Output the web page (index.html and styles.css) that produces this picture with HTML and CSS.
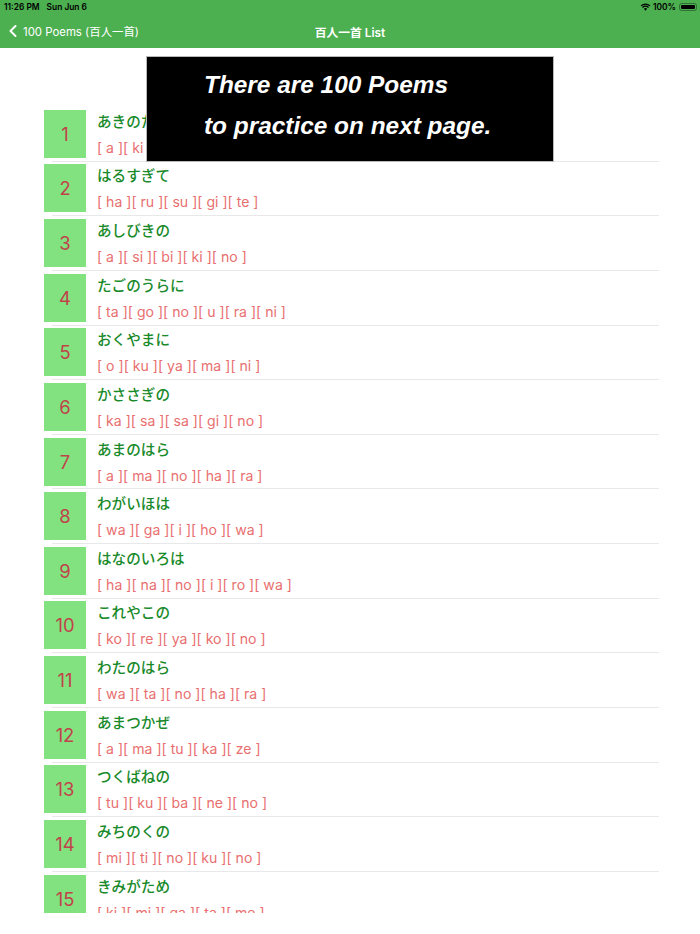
FILE: index.html
```html
<!DOCTYPE html>
<html lang="ja">
<head>
<meta charset="utf-8">
<title>百人一首 List</title>
<link rel="stylesheet" href="styles.css">
</head>
<body>
<header class="header">
  <div class="status">
    <div class="status-left"><span>11:26 PM</span><span>Sun Jun 6</span></div>
    <div class="status-right">
      <svg class="wifi" viewBox="0 0 12 9" width="11" height="8"><path d="M6 8.6 L4.2 6.6 A2.6 2.6 0 0 1 7.8 6.6 Z" fill="#000"/><path d="M2.6 5 A4.9 4.9 0 0 1 9.4 5" stroke="#000" stroke-width="1.4" fill="none"/><path d="M0.9 3.2 A7.4 7.4 0 0 1 11.1 3.2" stroke="#000" stroke-width="1.4" fill="none"/></svg>
      <span>100%</span>
      <span class="battery"><span class="battery-fill"></span></span>
    </div>
  </div>
  <nav class="navbar">
    <a class="back">
      <svg viewBox="0 0 8 12" width="8" height="12"><path d="M6.5 1 L1.5 6 L6.5 11" stroke="#fff" stroke-width="2" fill="none" stroke-linecap="round" stroke-linejoin="round"/></svg>
      <span>100 Poems (百人一首)</span>
    </a>
    <div class="title">百人一首 List</div>
    <div></div>
  </nav>
</header>

<main class="list">
  <div class="row"><div class="num">1</div><div class="txt"><div class="kana">あきのたの</div><div class="roma">[ a ][ ki ][ no ][ ta ][ no ]</div></div></div>
  <div class="row"><div class="num">2</div><div class="txt"><div class="kana">はるすぎて</div><div class="roma">[ ha ][ ru ][ su ][ gi ][ te ]</div></div></div>
  <div class="row"><div class="num">3</div><div class="txt"><div class="kana">あしびきの</div><div class="roma">[ a ][ si ][ bi ][ ki ][ no ]</div></div></div>
  <div class="row"><div class="num">4</div><div class="txt"><div class="kana">たごのうらに</div><div class="roma">[ ta ][ go ][ no ][ u ][ ra ][ ni ]</div></div></div>
  <div class="row"><div class="num">5</div><div class="txt"><div class="kana">おくやまに</div><div class="roma">[ o ][ ku ][ ya ][ ma ][ ni ]</div></div></div>
  <div class="row"><div class="num">6</div><div class="txt"><div class="kana">かささぎの</div><div class="roma">[ ka ][ sa ][ sa ][ gi ][ no ]</div></div></div>
  <div class="row"><div class="num">7</div><div class="txt"><div class="kana">あまのはら</div><div class="roma">[ a ][ ma ][ no ][ ha ][ ra ]</div></div></div>
  <div class="row"><div class="num">8</div><div class="txt"><div class="kana">わがいほは</div><div class="roma">[ wa ][ ga ][ i ][ ho ][ wa ]</div></div></div>
  <div class="row"><div class="num">9</div><div class="txt"><div class="kana">はなのいろは</div><div class="roma">[ ha ][ na ][ no ][ i ][ ro ][ wa ]</div></div></div>
  <div class="row"><div class="num">10</div><div class="txt"><div class="kana">これやこの</div><div class="roma">[ ko ][ re ][ ya ][ ko ][ no ]</div></div></div>
  <div class="row"><div class="num">11</div><div class="txt"><div class="kana">わたのはら</div><div class="roma">[ wa ][ ta ][ no ][ ha ][ ra ]</div></div></div>
  <div class="row"><div class="num">12</div><div class="txt"><div class="kana">あまつかぜ</div><div class="roma">[ a ][ ma ][ tu ][ ka ][ ze ]</div></div></div>
  <div class="row"><div class="num">13</div><div class="txt"><div class="kana">つくばねの</div><div class="roma">[ tu ][ ku ][ ba ][ ne ][ no ]</div></div></div>
  <div class="row"><div class="num">14</div><div class="txt"><div class="kana">みちのくの</div><div class="roma">[ mi ][ ti ][ no ][ ku ][ no ]</div></div></div>
  <div class="row"><div class="num">15</div><div class="txt"><div class="kana">きみがため</div><div class="roma">[ ki ][ mi ][ ga ][ ta ][ me ]</div></div></div>
</main>

<div class="notice">
  <p>There are 100 Poems</p>
  <p>to practice on next page.</p>
</div>
</body>
</html>
```

FILE: styles.css
```css
html, body {
  margin: 0;
  padding: 0;
  background: #ffffff;
}
body {
  font-family: Inter, Roboto, "Noto Sans CJK JP", sans-serif;
  position: relative;
  height: 934px;
  overflow: hidden;
}
.header {
  background: #4caf50;
  height: 48px;
  display: flex;
  flex-direction: column;
}
.status {
  height: 14px;
  display: flex;
  justify-content: space-between;
  align-items: center;
  padding: 0 2px 0 4px;
  font-size: 8.4px;
  font-weight: 600;
  color: #000;
}
.status-left {
  display: flex;
  gap: 7px;
}
.status-right {
  display: flex;
  align-items: center;
  gap: 2px;
}
.battery {
  width: 18px;
  height: 8px;
  border: 1px solid rgba(0,0,0,0.35);
  border-radius: 2.5px;
  padding: 1px;
  box-sizing: border-box;
  display: inline-flex;
  margin-left: 1px;
  margin-right: 1px;
}
.battery-fill {
  flex: 1;
  background: #000;
  border-radius: 1px;
}
.navbar {
  height: 34px;
  display: grid;
  grid-template-columns: 1fr auto 1fr;
  align-items: center;
  color: #fff;
}
.back {
  display: flex;
  align-items: center;
  gap: 6px;
  padding-left: 9px;
  font-size: 11.4px;
  font-family: Inter, "Noto Sans CJK JP", sans-serif;
}
.back svg {
  display: block;
}
.title {
  font-size: 11.8px;
  font-weight: 600;
  font-family: Inter, "Noto Sans CJK JP", sans-serif;
}
.list {
  margin: 59px 41px 0 44px;
  height: 806px;
  overflow: hidden;
}
.row {
  height: 54.64px;
  display: flex;
  align-items: center;
  background: linear-gradient(#e8e8e8, #e8e8e8) no-repeat 8px 100% / calc(100% - 8px) 1px;
}
.num {
  width: 42px;
  height: 48px;
  flex: none;
  background: #82e27f;
  color: #c0434b;
  font-size: 18.4px;
  display: flex;
  align-items: center;
  justify-content: center;
  margin-right: 11px;
  margin-top: -1px;
}
.txt {
  display: flex;
  flex-direction: column;
  margin-top: -1px;
}
.kana {
  font-family: "Noto Sans CJK JP", sans-serif;
  font-size: 14.6px;
  font-weight: 500;
  line-height: 27px;
  color: #198a2a;
}
.roma {
  font-family: Inter, Roboto, sans-serif;
  font-size: 14.1px;
  line-height: 27px;
  color: #e86f6f;
}
.notice {
  position: absolute;
  left: 146px;
  top: 56px;
  width: 408px;
  height: 106px;
  box-sizing: border-box;
  background: #000;
  border: 1px solid #b8b8b8;
  padding: 7px 0 0 57px;
  color: #fff;
  font-family: "Liberation Sans", Arial, sans-serif;
  font-weight: bold;
  font-style: italic;
  font-size: 24.4px;
}
.notice p {
  margin: 0;
  line-height: 41px;
}
```
